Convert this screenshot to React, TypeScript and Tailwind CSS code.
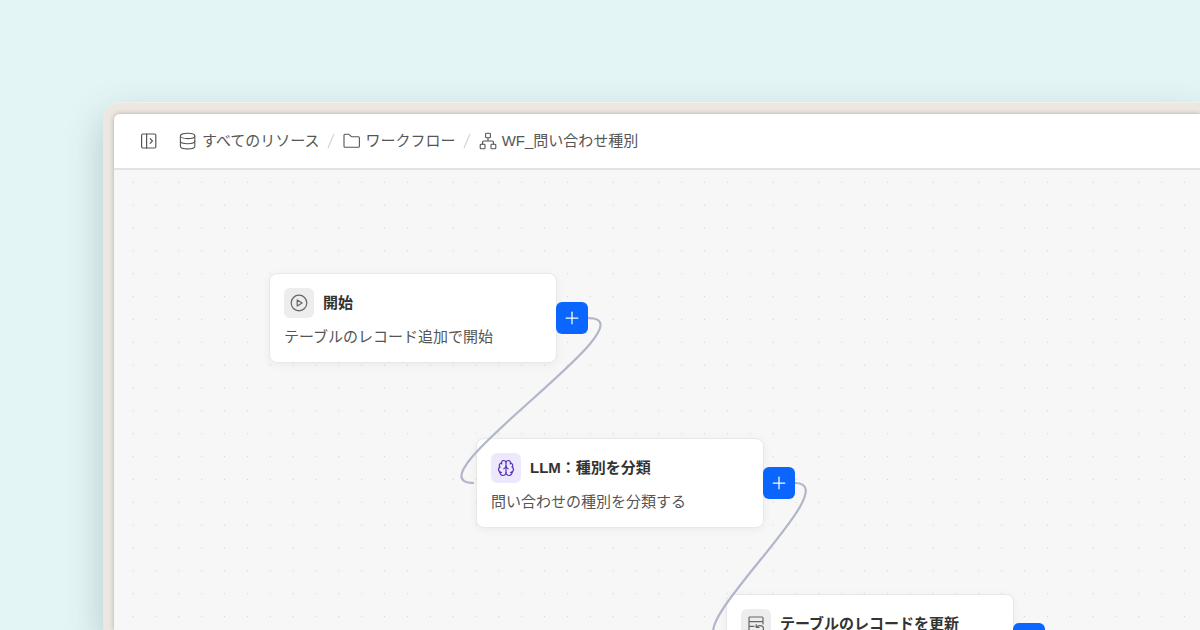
import React from 'react';
import { Brain, Plus } from 'lucide-react';

type IconProps = { className?: string };

const SidebarIcon: React.FC<IconProps> = ({ className }) => (
  <svg viewBox="0 0 18 18" fill="none" stroke="currentColor" strokeWidth="1.2" strokeLinecap="round" strokeLinejoin="round" className={className} aria-hidden="true">
    <rect x="1.6" y="2" width="14.2" height="14" rx="1.2" />
    <path d="M6.6 2v14M10.2 6.7 12.4 9l-2.2 2.3" />
  </svg>
);

const DatabaseIcon: React.FC<IconProps> = ({ className }) => (
  <svg viewBox="0 0 18 18" fill="none" stroke="currentColor" strokeWidth="1.1" strokeLinecap="round" strokeLinejoin="round" className={className} aria-hidden="true">
    <ellipse cx="8.6" cy="3.9" rx="7.2" ry="2.7" />
    <path d="M1.4 3.9v10.3c0 1.5 3.2 2.7 7.2 2.7s7.2-1.2 7.2-2.7V3.9" />
    <path d="M1.4 9c0 1.5 3.2 2.7 7.2 2.7s7.2-1.2 7.2-2.7" />
  </svg>
);

const FolderIcon: React.FC<IconProps> = ({ className }) => (
  <svg viewBox="0 0 18 18" fill="none" stroke="currentColor" strokeWidth="1.1" strokeLinecap="round" strokeLinejoin="round" className={className} aria-hidden="true">
    <path d="M1 14.3V3.3c0-.6.4-1 1-1h3.6c.3 0 .5.1.7.3l1.8 1.8c.2.2.4.3.7.3h6.6c.6 0 1 .4 1 1v8.6c0 .6-.4 1-1 1H2c-.6 0-1-.4-1-1Z" />
  </svg>
);

const WorkflowIcon: React.FC<IconProps> = ({ className }) => (
  <svg viewBox="0 0 18 18" fill="none" stroke="currentColor" strokeWidth="1.1" strokeLinecap="round" strokeLinejoin="round" className={className} aria-hidden="true">
    <rect x="6.6" y="1.2" width="4.8" height="4.6" rx="0.9" />
    <rect x="1.2" y="12.2" width="4.8" height="4.6" rx="0.9" />
    <rect x="12" y="12.2" width="4.8" height="4.6" rx="0.9" />
    <path d="M9 5.8V9M3.6 12.2V10c0-.6.4-1 1-1h8.8c.6 0 1 .4 1 1v2.2" />
  </svg>
);

const StartIcon: React.FC<IconProps> = ({ className }) => (
  <svg viewBox="0 0 18 18" fill="none" stroke="currentColor" strokeWidth="1.2" strokeLinejoin="round" className={className} aria-hidden="true">
    <circle cx="9" cy="9" r="7.8" />
    <path d="M7.2 5.9v6.2L12.1 9 7.2 5.9Z" />
  </svg>
);

const TableUpdateIcon: React.FC<IconProps> = ({ className }) => (
  <svg viewBox="0 0 18 18" fill="none" stroke="currentColor" strokeWidth="1.2" strokeLinecap="round" strokeLinejoin="round" className={className} aria-hidden="true">
    <path d="M6.5 15.8H3c-.6 0-1-.4-1-1V3c0-.6.4-1 1-1h12c.6 0 1 .4 1 1v6M2 6.6h14M2 11.4h5" />
    <path d="M9.2 9.6v2.8h2.8M9.4 12.2c.8-1 2-1.6 3.4-1.6 2.1 0 3.7 1.3 3.7 3.2s-1.6 3.2-3.7 3.2" />
  </svg>
);

const crumbs = [
  { label: 'すべてのリソース', Icon: DatabaseIcon },
  { label: 'ワークフロー', Icon: FolderIcon },
  { label: 'WF_問い合わせ種別', Icon: WorkflowIcon },
];

const nodes = [
  {
    title: '開始',
    description: 'テーブルのレコード追加で開始',
    position: 'left-[155px] top-[103px]',
    tone: 'bg-[#ededed] text-[#666]',
    icon: <StartIcon className="size-[18px]" />,
  },
  {
    title: 'LLM：種別を分類',
    description: '問い合わせの種別を分類する',
    position: 'left-[362px] top-[268px]',
    tone: 'bg-[#ede8fd] text-[#5b35b5]',
    icon: <Brain className="size-[18px]" strokeWidth={1.6} />,
  },
  {
    title: 'テーブルのレコードを更新',
    description: '',
    position: 'left-[612px] top-[424px]',
    tone: 'bg-[#ededed] text-[#666]',
    icon: <TableUpdateIcon className="size-[18px]" />,
  },
];

const Header: React.FC = () => (
  <header className="flex h-[54px] shrink-0 items-center gap-[21px] bg-white px-[26px] text-[#555]">
    <button type="button" aria-label="サイドバーを開く" className="cursor-pointer">
      <SidebarIcon className="size-[18px]" />
    </button>
    <nav aria-label="パンくずリスト">
      <ol className="flex items-center text-[15px] leading-6">
        {crumbs.map(({ label, Icon }, i) => (
          <li key={label} className="flex items-center">
            {i > 0 && (
              <svg viewBox="0 0 8 16" className="mr-2 ml-[7px] h-4 w-2 text-[#d4d4d4]" stroke="currentColor" strokeWidth="1.2" aria-hidden="true">
                <path d="M1 15 7 1" />
              </svg>
            )}
            <a href="#" className="flex items-center gap-[5px] whitespace-nowrap">
              <Icon className="size-[18px]" />
              {label}
            </a>
          </li>
        ))}
      </ol>
    </nav>
  </header>
);

const Canvas: React.FC = () => (
  <main className="relative flex-1 overflow-hidden border-t-2 border-[#e3e3e3] bg-[#f7f7f7]">
    {/* Dot grid */}
    <svg className="absolute inset-0 size-full" aria-hidden="true">
      <defs>
        <pattern id="dots" x="7.7" y="0.9" width="22.857" height="22.857" patternUnits="userSpaceOnUse">
          <circle cx="11.4" cy="11.4" r="0.6" fill="#d2d2d2" />
        </pattern>
      </defs>
      <rect width="100%" height="100%" fill="url(#dots)" />
    </svg>

    {nodes.map((node) => (
      <div key={node.title} className={`absolute flex items-center ${node.position}`}>
        <article className="w-72 rounded-lg border border-[#e8e8e8] bg-white px-[14px] pt-[14px] pb-[13px] shadow-[0_2px_10px_rgba(0,0,0,0.05)]">
          <div className="flex items-center gap-[9px]">
            <span className={`flex size-[30px] items-center justify-center rounded-md ${node.tone}`}>{node.icon}</span>
            <h2 className="text-[15px] leading-6 font-bold text-[#333]">{node.title}</h2>
          </div>
          <p className="mt-[7px] min-h-6 text-[15px] leading-6 text-[#555]">{node.description}</p>
        </article>
        <button type="button" aria-label="ノードを追加" className="-ml-px flex size-8 cursor-pointer items-center justify-center rounded-md bg-[#0a66ff] text-white">
          <Plus className="size-5" strokeWidth={1.5} />
        </button>
      </div>
    ))}

    {/* Connections between nodes */}
    <svg className="pointer-events-none absolute inset-0 size-full" fill="none" stroke="#b1b7c9" strokeWidth="2.2" aria-hidden="true">
      <path d="M474 148C545 148 289 313 360 313" />
      <path d="M681 313C737 313 554 469 610 469" />
    </svg>
  </main>
);

const App: React.FC = () => {
  return (
    <div className="flex h-screen overflow-hidden bg-[#e3f6f5] pt-[102px] pl-[103px] font-['Liberation_Sans','Noto_Sans_CJK_JP',sans-serif]">
      <div className="flex flex-1 rounded-tl-[18px] border-t border-[#f3efec] bg-[#ede7e2] pt-[11px] pl-[11px] shadow-[0_14px_36px_rgba(60,80,80,0.28)]">
        <div className="flex min-w-0 flex-1 flex-col overflow-hidden rounded-tl-md shadow-[0_0_5px_rgba(70,60,50,0.35)]">
          <Header />
          <Canvas />
        </div>
      </div>
    </div>
  );
};

export default App;
